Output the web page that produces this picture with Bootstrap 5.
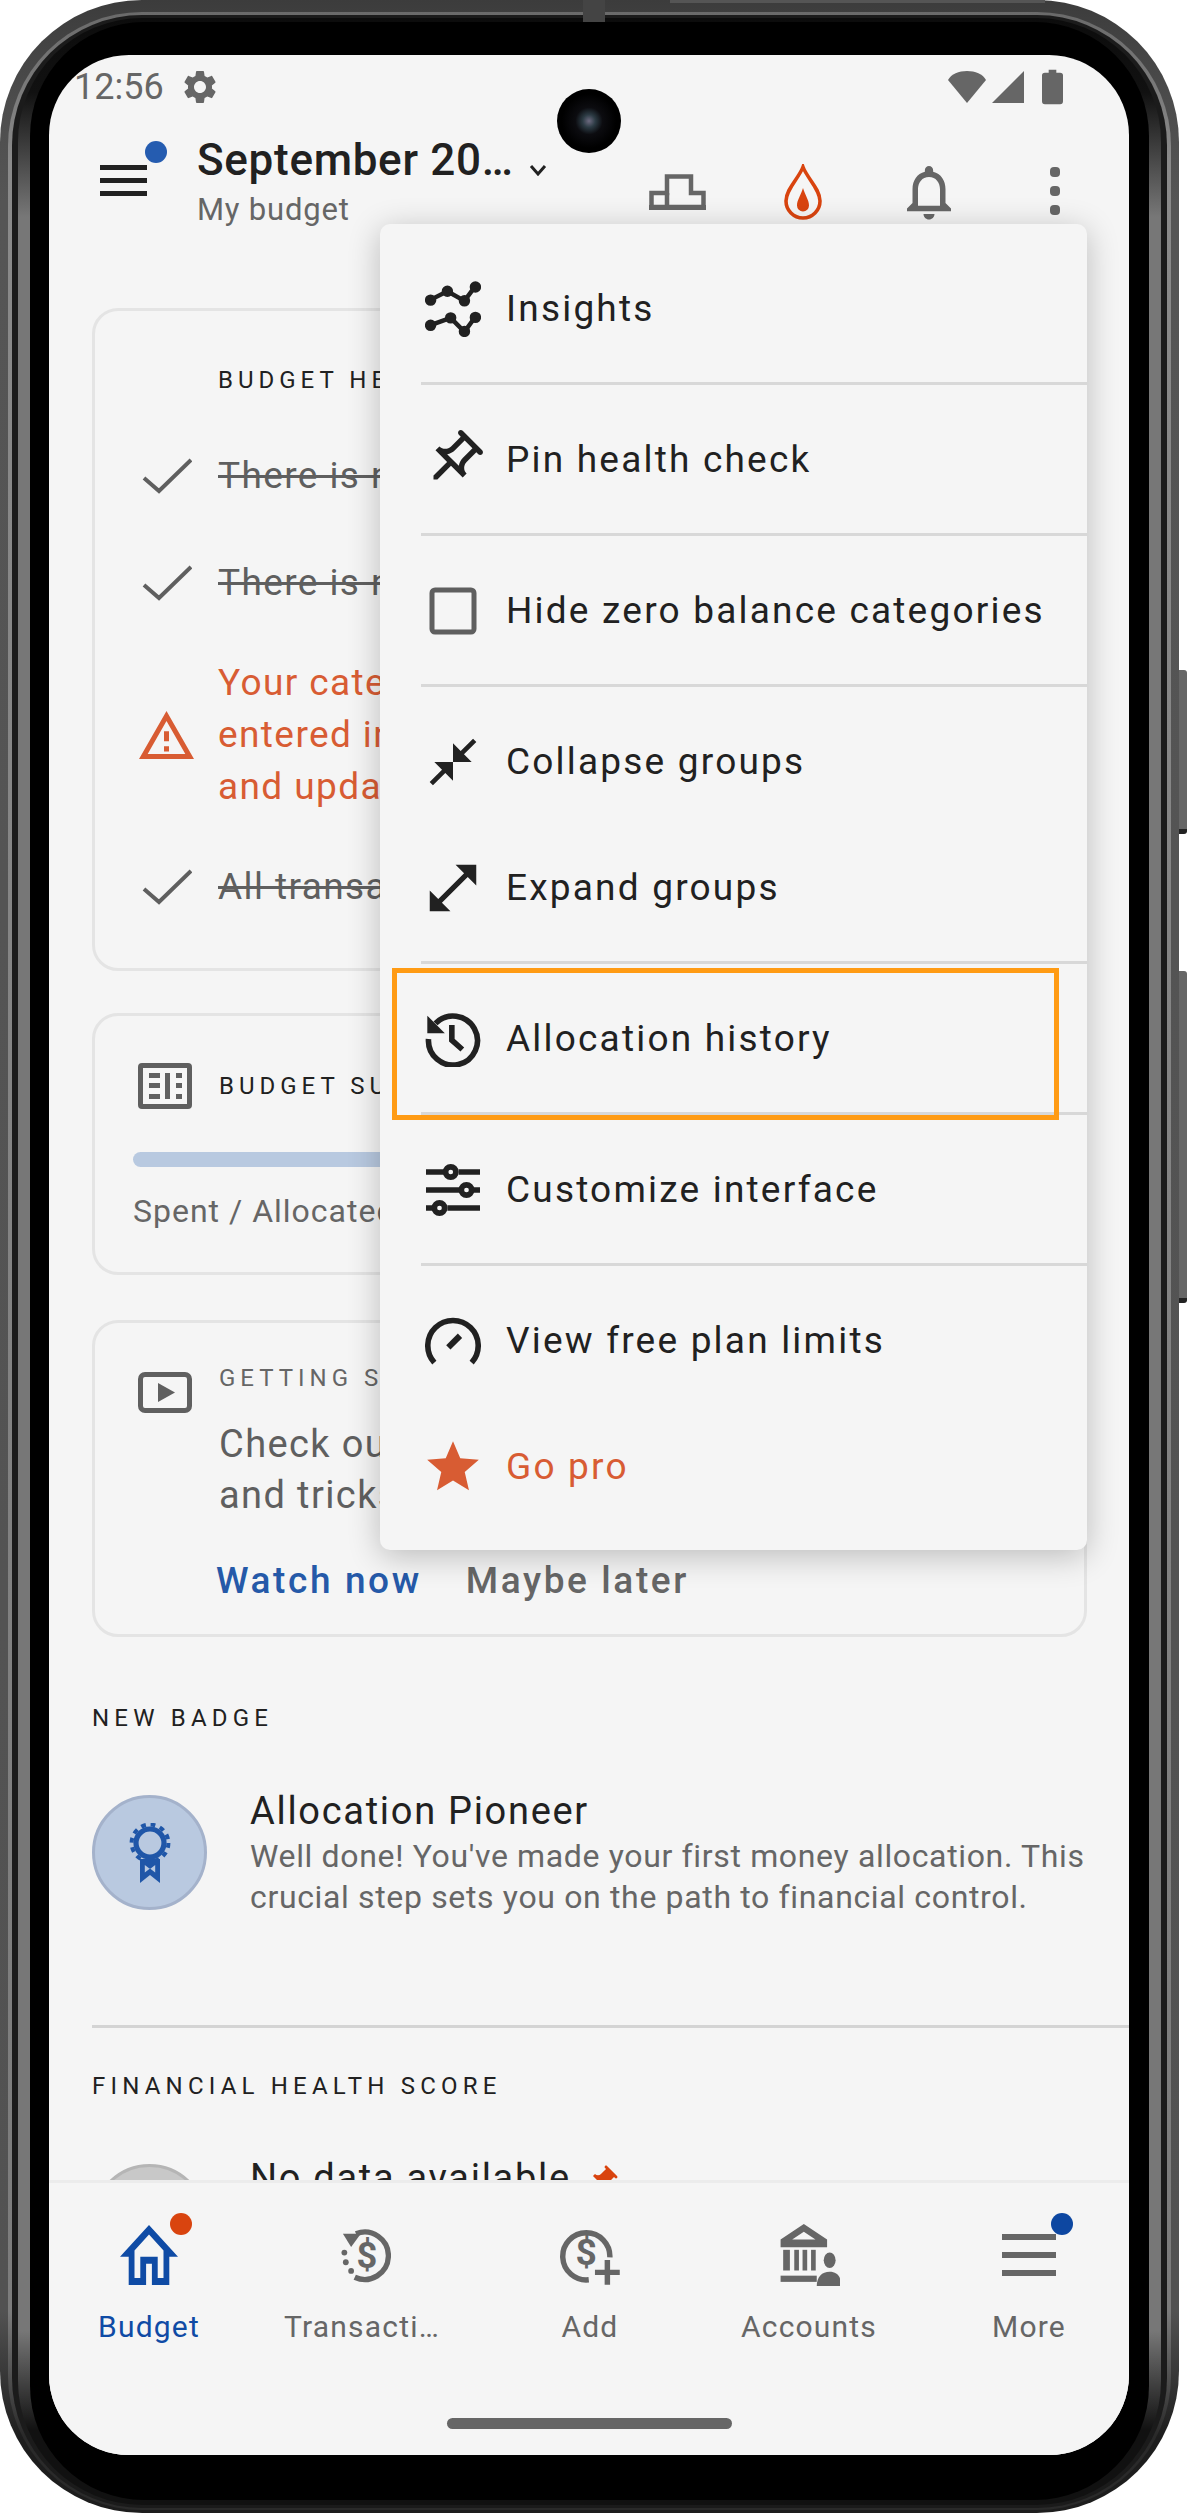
<!DOCTYPE html>
<html lang="en">
<head>
<meta charset="UTF-8">
<meta name="viewport" content="width=device-width, initial-scale=1">
<title>My budget</title>
<link href="https://cdn.jsdelivr.net/npm/bootstrap@5.3.0/dist/css/bootstrap.min.css" rel="stylesheet">
<style>
    html, body { margin: 0; background: #fff; }
    body { font-family: Roboto, "Liberation Sans", sans-serif; color: #212121; width: 1187px; height: 2513px; overflow: hidden; }

    /* phone frame, rings from outside in */
    .phone { position: relative; width: 1179px; height: 2513px; }
    .ring-a { height: 100%; padding: 12px 8px 3px; border-radius: 142px; background: linear-gradient(#3c3c3c 0, #4c4c4c 4%, #555 8%, #525252 92%, #1d1d1d 97%); }
    .ring-b { height: 100%; padding: 3px 4px 2px; border-radius: 134px; background: linear-gradient(#6a6a6a 0, #8a8a8a 6%, #7c7c7c 92%, #2a2a2a 97%); }
    .ring-c { height: 100%; padding: 3px 6px 3px; border-radius: 130px; background: #1b1b1b; }
    .ring-d { height: 100%; padding: 4px 12px 5px; border-radius: 124px; background: linear-gradient(#0c0c0c 0, #111 3%, #777 8%, #777 93%, #111 97%); }
    .bezel { height: 100%; padding: 33px 20px 45px 19px; border-radius: 114px; background: #000; }
    .side-key { position: absolute; left: 1179px; width: 8px; background: #666; border-radius: 0 3px 3px 0; border-bottom: 5px solid #222; }
    .key-a { top: 670px; height: 164px; }
    .key-b { top: 971px; height: 332px; }
    .top-seam { position: absolute; top: 0; left: 583px; width: 22px; height: 22px; background: #444; }
    .top-lip { position: absolute; top: 0; left: 670px; width: 375px; height: 3px; background: #555; }

    .screen { position: relative; width: 1080px; height: 2400px; border-radius: 80px; background: #f5f5f5; overflow: hidden; }
    .camera { position: absolute; left: 508px; top: 34px; width: 64px; height: 64px; border-radius: 50%; background: radial-gradient(circle at 50% 50%, #6d6a80 0, #2c3b44 14%, #0c0c10 30%, #000 60%); }

    /* status bar */
    .status-row { height: 64px; padding-right: 66px; flex: none; }
    .clock { width: 131px; padding-left: 25px; font-size: 36px; color: #666; line-height: 64px; }
    .sig-gap { margin: 0 18px 0 4px; }
    /* app bar */
    .app-row { height: 120px; flex: none; }
    .burger { position: relative; width: 148px; padding: 46px 0 0 51px; }
    .burger i { display: block; width: 47px; height: 5px; margin-bottom: 8px; background: #212121; }
    .dot { position: absolute; width: 22px; height: 22px; border-radius: 50%; }
    .burger .dot { left: 96px; top: 22px; background: #255cb0; }
    .month { font-size: 44px; font-weight: 500; line-height: 56px; padding-top: 13px; white-space: nowrap; letter-spacing: .7px; }
    .month svg { margin-left: 14px; vertical-align: -2px; }
    .budget-name { font-size: 31px; line-height: 44px; color: #666; letter-spacing: .8px; }
    .app-actions { padding-right: 11px; }
    .app-btn { width: 126px; height: 60px; margin-top: 43px; display: flex; align-items: center; justify-content: center; }

    /* scrolling body */
    .scroll-part { flex: 1 1 0; min-height: 0; overflow: hidden; padding: 69px 42px 0 43px; }
    .box { border: 3px solid #e4e4e4; border-radius: 26px; background: transparent; margin-bottom: 45px; }
    .box-label { font-size: 24px; line-height: 40px; letter-spacing: 5px; white-space: nowrap; }
    .icon-col { width: 103px; flex: none; display: flex; justify-content: center; }
    .hc-box { padding: 49px 0 48px 20px; margin-bottom: 42px; }
    .hc-head { padding-left: 103px; margin-bottom: 43px; }
    .hc-row { min-height: 66px; margin-bottom: 41px; display: flex; align-items: center; }
    .hc-row:last-child { margin-bottom: 0; }
    .hc-text { font-size: 37px; line-height: 52px; letter-spacing: 1.4px; white-space: nowrap; color: #5f5f5f; }
    .struck { text-decoration: line-through; }
    .warn-text { color: #d85c33; }
    .sum-box { padding: 47px 38px 39px; }
    .sum-head { padding-left: 5px; }
    .sum-head svg { margin-right: 27px; }
    .sum-track { height: 15px; margin: 43px 0 22px; border-radius: 8px; background: #b8c9e0; }
    .sum-foot { font-size: 32px; line-height: 44px; letter-spacing: 1px; color: #666; white-space: nowrap; }
    .tip-box { padding: 35px 0 28px 43px; margin-bottom: 0; }
    .tip-icon { width: 81px; flex: none; padding-top: 14px; }
    .tip-label { color: #666; margin-bottom: 21px; }
    .tip-copy { font-size: 38px; line-height: 51px; letter-spacing: 1.4px; color: #5f5f5f; white-space: nowrap; }
    .tip-actions { margin-top: 35px; margin-left: -3px; gap: 44px; }
    .tip-btn { font-size: 37px; font-weight: 500; line-height: 50px; letter-spacing: 2.6px; white-space: nowrap; }
    .tip-go { color: #2559a8; }
    .tip-no { color: #666; }
    .sect-label { font-size: 24px; line-height: 36px; letter-spacing: 5.2px; white-space: nowrap; }
    .badge-row { gap: 43px; }
    .medal { width: 115px; height: 115px; flex: none; margin-top: 9px; border-radius: 50%; background: #b9c9e0; border: 3px solid #a4b2cb; display: flex; align-items: center; justify-content: center; }
    .item-title { font-size: 38px; line-height: 50px; letter-spacing: 1.7px; white-space: nowrap; }
    .item-desc { font-size: 32px; line-height: 41px; letter-spacing: .65px; color: #666; white-space: nowrap; }
    .rule-full { height: 3px; margin: 107px -42px 40px 0; background: #d4d4d4; }
    .empty-disc { width: 115px; height: 115px; flex: none; margin-top: 11px; border-radius: 50%; background: #c8c8c8; border: 3px solid #b5b5b5; }
    .title-pin { margin-left: 3px; }

    /* bottom navigation */
    .tabs { height: 275px; flex: none; border-top: 3px solid #ececec; background: #f5f5f5; }
    .tab-row { display: grid; grid-template-columns: 200px 226px 230px 208px 216px; padding-top: 40px; }
    .tab-item { position: relative; text-align: center; color: #666; }
    .tab-item:last-child { padding-left: 16px; }
    .tab-icon { height: 64px; display: flex; align-items: center; justify-content: center; }
    .tab-text { display: block; margin-top: 20px; font-size: 30px; line-height: 40px; letter-spacing: 1.2px; white-space: nowrap; }
    .tab-on { color: #0f4ba5; }
    .tab-item .dot { top: -10px; }
    .dot-red { left: 121px; background: #d9440f; }
    .dot-navy { left: 138px; background: #0d47a1; }
    .gesture { width: 285px; height: 11px; margin: 71px auto 0; border-radius: 6px; background: #666; }

    /* overflow menu */
    .over-menu.dropdown-menu { display: block; position: absolute; left: 331px; top: 169px; width: 707px; padding: 21px 0; margin: 0; border: 0; border-radius: 10px; background: #f5f5f5; box-shadow: 0 6px 32px rgba(0, 0, 0, .24); }
    .over-menu .dropdown-item { display: flex; align-items: center; height: 126px; padding: 2px 0 0; color: #212121; background: transparent; font-size: 37px; letter-spacing: 2.2px; }
    .menu-ico { width: 126px; padding: 0 16px 0 36px; flex: none; display: flex; justify-content: center; }
    .over-menu .dropdown-divider { height: 3px; margin: 11px 0 11px 41px; border: 0; background: #d8d8d8; opacity: 1; }
    .over-menu .go-pro { color: #d85c33; }
    .mark-box { position: absolute; z-index: 1001; left: 343px; top: 913px; width: 667px; height: 152px; border: 5px solid #ff9b14; pointer-events: none; }
</style>
</head>
<body>
<div class="phone">
    <div class="side-key key-a"></div>
    <div class="side-key key-b"></div>
    <div class="ring-a"><div class="ring-b"><div class="ring-c"><div class="ring-d"><div class="bezel">
        <div class="screen d-flex flex-column">

            <!-- status bar -->
            <div class="d-flex align-items-center status-row">
                <span class="clock">12:56</span>
                <svg width="40" height="40" viewBox="0 0 24 24" fill="#666"><path d="M19.14 12.94c.04-.3.06-.61.06-.94 0-.32-.02-.64-.07-.94l2.03-1.58c.18-.14.23-.41.12-.61l-1.92-3.32c-.12-.22-.37-.29-.59-.22l-2.39.96c-.5-.38-1.03-.7-1.62-.94l-.36-2.54c-.04-.24-.24-.41-.48-.41h-3.84c-.24 0-.43.17-.47.41l-.36 2.54c-.59.24-1.13.57-1.62.94l-2.39-.96c-.22-.08-.47 0-.59.22L2.74 8.87c-.12.21-.08.47.12.61l2.03 1.58c-.05.3-.09.63-.09.94s.02.64.07.94l-2.03 1.58c-.18.14-.23.41-.12.61l1.92 3.32c.12.22.37.29.59.22l2.39-.96c.5.38 1.03.7 1.62.94l.36 2.54c.05.24.24.41.48.41h3.84c.24 0 .44-.17.47-.41l.36-2.54c.59-.24 1.13-.56 1.62-.94l2.39.96c.22.08.47 0 .59-.22l1.92-3.32c.12-.22.07-.47-.12-.61l-2.01-1.58zM12 15.6c-1.98 0-3.6-1.62-3.6-3.6s1.62-3.6 3.6-3.6 3.6 1.62 3.6 3.6-1.62 3.6-3.6 3.6z"/></svg>
                <div class="ms-auto d-flex align-items-center">
                    <svg width="40" height="34" viewBox="0 0 40 34" fill="#666"><path d="M20 33 1 10C4 4 12 1 20 1s16 3 19 9z"/></svg>
                    <svg class="sig-gap" width="33" height="34" viewBox="0 0 33 34" fill="#666"><path d="M33 1v32H1z"/></svg>
                    <svg width="21" height="36" viewBox="0 0 22 36" fill="#666"><path d="M7 0h8v3h4a3 3 0 0 1 3 3v27a3 3 0 0 1-3 3H3a3 3 0 0 1-3-3V6a3 3 0 0 1 3-3h4z"/></svg>
                </div>
            </div>

            <!-- app bar -->
            <div class="d-flex app-row">
                <div class="burger"><i></i><i></i><i></i><span class="dot"></span></div>
                <div class="flex-grow-1">
                    <div class="month">September 20…<svg width="20" height="14" viewBox="0 0 20 14" fill="none" stroke="#212121" stroke-width="3"><path d="M3 3l7 8 7-8"/></svg></div>
                    <div class="budget-name">My budget</div>
                </div>
                <div class="d-flex app-actions">
                    <div class="app-btn">
                        <svg width="57" height="36" viewBox="0 0 57 36" fill="none" stroke="#666" stroke-width="4.500"><path d="M2.500 33V19H18V2.500H42V19H54.500V33z"/><path d="M18 19V31"/><path d="M0 33.500h57" stroke-width="5"/></svg>
                    </div>
                    <div class="app-btn">
                        <svg width="44" height="56" viewBox="0 0 22 28" fill="none" stroke="#d9440f" stroke-width="1.800"><path d="M11 1.500C9 7 2.500 12.500 2.500 18.500a8.500 8.500 0 0 0 17 0C19.500 12.500 13 7 11 1.500z"/><path fill="#d9440f" stroke="none" d="M11 12c-1.200 4-3 6-3 8.800a3 3 0 0 0 6 0c0-2.800-1.800-4.800-3-8.800z"/></svg>
                    </div>
                    <div class="app-btn">
                        <svg width="66" height="66" viewBox="0 0 24 24" fill="#666"><path d="M12 22c1.100 0 2-.9 2-2h-4c0 1.100.9 2 2 2zm6-6v-5c0-3.070-1.630-5.640-4.500-6.320V4c0-.83-.67-1.500-1.500-1.500s-1.500.67-1.500 1.500v.68C7.640 5.360 6 7.920 6 11v5l-2 2v1h16v-1l-2-2zm-2 1H8v-6c0-2.480 1.510-4.500 4-4.500s4 2.020 4 4.500v6z"/></svg>
                    </div>
                    <div class="app-btn">
                        <svg width="12" height="50" viewBox="0 0 12 50" fill="#666"><rect x="1" y="0" width="10" height="10" rx="4"/><rect x="1" y="19" width="10" height="10" rx="4"/><rect x="1" y="38" width="10" height="10" rx="4"/></svg>
                    </div>
                </div>
            </div>

            <!-- budget page -->
            <div class="scroll-part">
                <div class="card box hc-box">
                    <div class="box-label hc-head">BUDGET HEALTH CHECK</div>
                    <div class="hc-row">
                        <div class="icon-col"><svg width="50" height="38" viewBox="0 0 50 38" fill="none" stroke="#5f5f5f" stroke-width="4"><path d="M2 21l15 13L49 3"/></svg></div>
                        <div class="hc-text struck">There is no debt</div>
                    </div>
                    <div class="hc-row">
                        <div class="icon-col"><svg width="50" height="38" viewBox="0 0 50 38" fill="none" stroke="#5f5f5f" stroke-width="4"><path d="M2 21l15 13L49 3"/></svg></div>
                        <div class="hc-text struck">There is no money left</div>
                    </div>
                    <div class="hc-row">
                        <div class="icon-col"><svg width="55" height="48" viewBox="1 2 22 19" preserveAspectRatio="none" fill="#d85c33"><path d="M12 5.990L19.530 19H4.470L12 5.990M12 2L1 21h22L12 2zm1 14h-2v2h2v-2zm0-6h-2v4h2v-4z"/></svg></div>
                        <div class="hc-text warn-text">Your categories are<br>entered in full<br>and updated</div>
                    </div>
                    <div class="hc-row">
                        <div class="icon-col"><svg width="50" height="38" viewBox="0 0 50 38" fill="none" stroke="#5f5f5f" stroke-width="4"><path d="M2 21l15 13L49 3"/></svg></div>
                        <div class="hc-text struck">All transactions</div>
                    </div>
                </div>

                <div class="card box sum-box">
                    <div class="d-flex align-items-center sum-head">
                        <svg width="54" height="46" viewBox="0 0 54 46" fill="#5f5f5f"><path fill-rule="evenodd" d="M4 0h46a4 4 0 0 1 4 4v38a4 4 0 0 1-4 4H4a4 4 0 0 1-4-4V4a4 4 0 0 1 4-4zm1 5v36h44V5z"/><rect x="11" y="10" width="11" height="5"/><rect x="11" y="20" width="11" height="5"/><rect x="11" y="31" width="11" height="5"/><rect x="27" y="10" width="5" height="26"/><rect x="38" y="10" width="6" height="5"/><rect x="38" y="20" width="6" height="5"/><rect x="38" y="31" width="6" height="5"/></svg>
                        <div class="box-label">BUDGET SUMMARY</div>
                    </div>
                    <div class="sum-track"></div>
                    <div class="sum-foot">Spent / Allocated</div>
                </div>

                <div class="card box tip-box">
                    <div class="d-flex">
                        <div class="tip-icon"><svg width="54" height="41" viewBox="0 0 54 41" fill="#5f5f5f"><path fill-rule="evenodd" d="M7 0h40a7 7 0 0 1 7 7v27a7 7 0 0 1-7 7H7a7 7 0 0 1-7-7V7a7 7 0 0 1 7-7zm0 5a2 2 0 0 0-2 2v27a2 2 0 0 0 2 2h40a2 2 0 0 0 2-2V7a2 2 0 0 0-2-2z"/><path d="M20 11l17 9.500-17 9.500z"/></svg></div>
                        <div>
                            <div class="box-label tip-label">GETTING STARTED</div>
                            <div class="tip-copy">Check out our tips<br>and tricks</div>
                            <div class="d-flex tip-actions">
                                <span class="tip-btn tip-go">Watch now</span>
                                <span class="tip-btn tip-no">Maybe later</span>
                            </div>
                        </div>
                    </div>
                </div>

                <div class="sect-label" style="margin-top:63px;margin-bottom:50px">NEW BADGE</div>
                <div class="d-flex badge-row">
                    <div class="medal">
                        <svg width="44" height="60" viewBox="0 0 22 30" fill="#1f56a8"><circle cx="11" cy="10" r="7" fill="none" stroke="#1f56a8" stroke-width="2.600"/><circle cx="11" cy="10" r="9.200" fill="none" stroke="#1f56a8" stroke-width="2" stroke-dasharray="2.400 2.420"/><path fill-rule="evenodd" d="M6 18h10v12l-5-4-5 4zm2.400 3v3.800L11 22.800l2.600 2V21l-2.600 2z"/></svg>
                    </div>
                    <div>
                        <div class="item-title">Allocation Pioneer</div>
                        <div class="item-desc">Well done! You've made your first money allocation. This<br>crucial step sets you on the path to financial control.</div>
                    </div>
                </div>
                <div class="rule-full"></div>
                <div class="sect-label" style="margin-bottom:49px">FINANCIAL HEALTH SCORE</div>
                <div class="d-flex badge-row">
                    <div class="empty-disc"></div>
                    <div class="item-title">No data available
                        <svg class="title-pin" width="34" height="40" viewBox="0 0 24 24" fill="#d9440f"><path transform="rotate(45 12 12)" d="M16 9V4h1c.55 0 1-.45 1-1s-.45-1-1-1H7c-.55 0-1 .45-1 1s.45 1 1 1h1v5c0 1.660-1.340 3-3 3v2h5.970v7l1 1 1-1v-7H19v-2c-1.660 0-3-1.340-3-3z"/></svg>
                    </div>
                </div>
            </div>

            <!-- bottom tabs -->
            <div class="tabs">
                <div class="tab-row">
                    <div class="tab-item tab-on">
                        <span class="dot dot-red"></span>
                        <div class="tab-icon"><svg width="58" height="60" viewBox="2 3 20 17" preserveAspectRatio="none" fill="#0f4ba5"><path d="M12 5.690l5 4.500V18h-2v-6H9v6H7v-7.810l5-4.500M12 3L2 12h3v8h6v-6h2v6h6v-8h3L12 3z"/></svg></div>
                        <span class="tab-text">Budget</span>
                    </div>
                    <div class="tab-item">
                        <div class="tab-icon"><svg width="58" height="60" viewBox="-1.500 0 24 24" fill="none" stroke="#666" stroke-width="2.200"><path d="M8 3.200a9.800 9.800 0 1 1-.5 18"/><path fill="#666" stroke="none" d="M2.600 3.200l7.400 0-4 5.500z"/><circle cx="3.200" cy="11" r="1.200" fill="#666" stroke="none"/><circle cx="3.800" cy="15" r="1.200" fill="#666" stroke="none"/><circle cx="6" cy="18.600" r="1.200" fill="#666" stroke="none"/><text x="12.500" y="17.200" font-size="15" font-weight="700" text-anchor="middle" fill="#666" stroke="none" font-family="Roboto, sans-serif">$</text></svg></div>
                        <span class="tab-text">Transacti…</span>
                    </div>
                    <div class="tab-item">
                        <div class="tab-icon"><svg width="60" height="62" viewBox="0 0 24 25" fill="none" stroke="#666" stroke-width="2.200"><path d="M20 13.500a9.500 9.500 0 1 0-8.500 9"/><path d="M19 14.500v10M14 19.500h10"/><text x="10.500" y="16.400" font-size="15" font-weight="700" text-anchor="middle" fill="#666" stroke="none" font-family="Roboto, sans-serif">$</text></svg></div>
                        <span class="tab-text">Add</span>
                    </div>
                    <div class="tab-item">
                        <div class="tab-icon"><svg width="62" height="62" viewBox="0 0 24 24" fill="#666"><path fill-rule="evenodd" d="M10 0l9 6v3H1V6zm0 3L5.500 6h9z"/><rect x="2" y="10" width="2.600" height="8"/><rect x="6.300" y="10" width="1.800" height="8"/><rect x="9.500" y="10" width="1.800" height="8"/><rect x="12.800" y="10" width="1.800" height="8"/><rect x="1" y="20" width="14" height="2.400"/><ellipse cx="20" cy="14" rx="2.300" ry="3"/><path d="M15 24c0-3.500 2-5.500 5-5.500s4.500 2 4.500 5.500z"/></svg></div>
                        <span class="tab-text">Accounts</span>
                    </div>
                    <div class="tab-item">
                        <span class="dot dot-navy"></span>
                        <div class="tab-icon"><svg width="54" height="42" viewBox="0 0 54 42" fill="#666"><rect width="54" height="6"/><rect y="18" width="54" height="6"/><rect y="36" width="54" height="6"/></svg></div>
                        <span class="tab-text">More</span>
                    </div>
                </div>
                <div class="gesture"></div>
            </div>

            <!-- overflow menu -->
            <div class="dropdown-menu show over-menu">
                <a class="dropdown-item" href="#"><span class="menu-ico"><svg width="56" height="56" viewBox="0 0 24 24" fill="#212121" stroke="#212121" stroke-width="1.900"><path fill="none" d="M2.100 8.200l7.500-3.800 7.300 4.100 4.700-6.300M2.100 19l8.900-3.200 5.900 6 4.700-6.500"/><circle cx="2.400" cy="8.200" r="1.500"/><circle cx="9.600" cy="4.400" r="1.500"/><circle cx="16.900" cy="8.500" r="1.500"/><circle cx="21.600" cy="2.600" r="1.500"/><circle cx="2.400" cy="19" r="1.500"/><circle cx="11" cy="15.800" r="1.500"/><circle cx="16.900" cy="21.600" r="1.500"/><circle cx="21.600" cy="15.600" r="1.500"/></svg></span>Insights</a>
                <hr class="dropdown-divider">
                <a class="dropdown-item" href="#"><span class="menu-ico"><svg width="66" height="66" viewBox="0 0 24 24" fill="#212121"><path transform="rotate(45 12 12)" d="M14 4v5c0 1.120.37 2.160 1 3H9c.65-.86 1-1.900 1-3V4h4m3-2H7c-.55 0-1 .45-1 1s.45 1 1 1h1v5c0 1.660-1.340 3-3 3v2h5.970v7l1 1 1-1v-7H19v-2c-1.660 0-3-1.340-3-3V4h1c.55 0 1-.45 1-1s-.45-1-1-1z"/></svg></span>Pin health check</a>
                <hr class="dropdown-divider">
                <a class="dropdown-item" href="#"><span class="menu-ico"><svg width="48" height="48" viewBox="0 0 48 48" fill="none" stroke="#5f5f5f" stroke-width="5"><rect x="3" y="3" width="42" height="42" rx="3"/></svg></span>Hide zero balance categories</a>
                <hr class="dropdown-divider">
                <a class="dropdown-item" href="#"><span class="menu-ico"><svg width="56" height="56" viewBox="0 0 24 24" fill="#212121"><path d="M22 3.410l-5.290 5.290L20 12h-8V4l3.290 3.290L20.590 2 22 3.410zM3.410 22l5.290-5.290L12 20v-8H4l3.290 3.290L2 20.590 3.410 22z"/></svg></span>Collapse groups</a>
                <a class="dropdown-item" href="#"><span class="menu-ico"><svg width="62" height="62" viewBox="0 0 24 24" fill="#212121"><path d="M21 11V3h-8l3.290 3.290-10 10L3 13v8h8l-3.290-3.290 10-10z"/></svg></span>Expand groups</a>
                <hr class="dropdown-divider">
                <a class="dropdown-item" href="#"><span class="menu-ico"><svg width="56" height="56" viewBox="0 0 24 24" fill="none" stroke="#212121" stroke-width="2.400"><path d="M4.500 5.300A10.500 10.500 0 1 1 1.500 12"/><path fill="#212121" stroke="none" d="M1 2v7.500h7.500z"/><path d="M11.500 6v6.500l4.500 4"/></svg></span>Allocation history</a>
                <hr class="dropdown-divider">
                <a class="dropdown-item" href="#"><span class="menu-ico"><svg width="54" height="54" viewBox="0 0 24 24" fill="none" stroke="#212121" stroke-width="2.500"><path d="M0 4h8M14.500 4H24M0 12h15M21 12h3M0 20h3M9.500 20H24"/><circle cx="11" cy="4" r="2.300"/><circle cx="18" cy="12" r="2.300"/><circle cx="6" cy="20" r="2.300"/></svg></span>Customize interface</a>
                <hr class="dropdown-divider">
                <a class="dropdown-item" href="#"><span class="menu-ico"><svg width="56" height="48" viewBox="0 0 24 20.500" fill="none" stroke="#212121" stroke-width="2.400"><path d="M4 19.500a10.800 10.800 0 1 1 16 0"/><path stroke-width="2.600" d="M10 13l5-5"/></svg></span>View free plan limits</a>
                <a class="dropdown-item go-pro" href="#"><span class="menu-ico"><svg width="62" height="62" viewBox="0 0 24 24" fill="#d85c33"><path d="M12 17.270L18.180 21l-1.640-7.030L22 9.240l-7.190-.61L12 2 9.190 8.630 2 9.240l5.460 4.730L5.820 21z"/></svg></span>Go pro</a>
            </div>
            <div class="mark-box"></div>
            <div class="camera"></div>
        </div>
    </div></div></div></div></div>
    <div class="top-seam"></div>
    <div class="top-lip"></div>
</div>
<script src="https://cdn.jsdelivr.net/npm/bootstrap@5.3.0/dist/js/bootstrap.bundle.min.js"></script>
</body>
</html>
